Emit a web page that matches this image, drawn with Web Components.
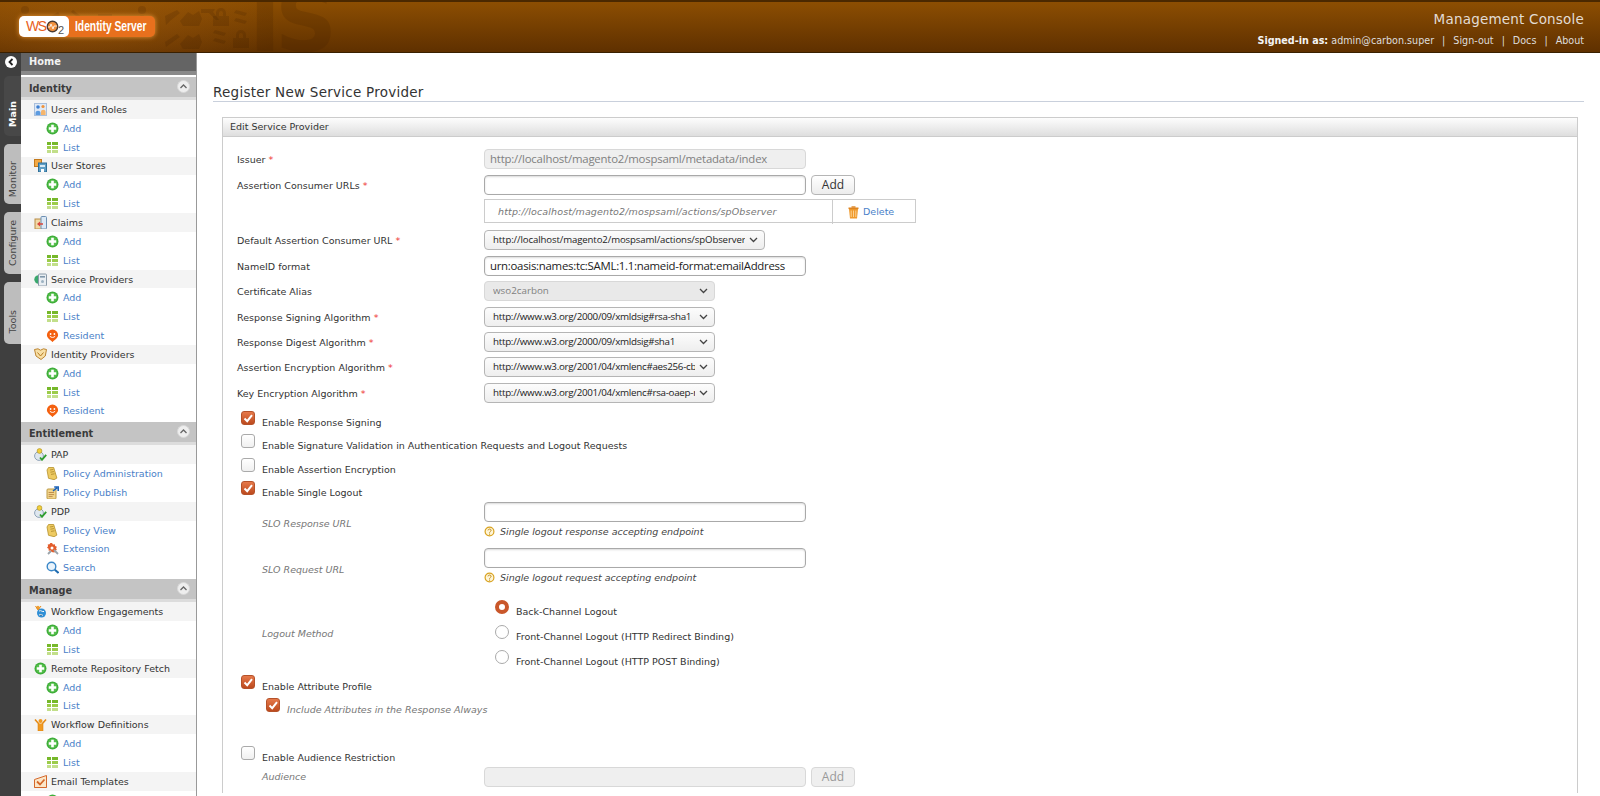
<!DOCTYPE html>
<html>
<head>
<meta charset="utf-8">
<title>Identity Server</title>
<style>
    html, body { margin: 0; height: 796px; overflow: hidden; background: #fff; }
    body { font-family: "DejaVu Sans", sans-serif; font-size: 9.5px; color: #333; }
</style>
</head>
<body>
<app-shell>
    <app-header slot="header"></app-header>
    <side-rail slot="rail"></side-rail>
    <side-nav slot="nav">
        <nav-section title="Identity" first>
            <nav-item icon="users" head>Users and Roles</nav-item>
            <nav-item icon="add">Add</nav-item>
            <nav-item icon="list">List</nav-item>
            <nav-item icon="store" head>User Stores</nav-item>
            <nav-item icon="add">Add</nav-item>
            <nav-item icon="list">List</nav-item>
            <nav-item icon="claims" head>Claims</nav-item>
            <nav-item icon="add">Add</nav-item>
            <nav-item icon="list">List</nav-item>
            <nav-item icon="sp" head>Service Providers</nav-item>
            <nav-item icon="add">Add</nav-item>
            <nav-item icon="list">List</nav-item>
            <nav-item icon="resident">Resident</nav-item>
            <nav-item icon="idp" head>Identity Providers</nav-item>
            <nav-item icon="add">Add</nav-item>
            <nav-item icon="list">List</nav-item>
            <nav-item icon="resident">Resident</nav-item>
        </nav-section>
        <nav-section title="Entitlement">
            <nav-item icon="person" head>PAP</nav-item>
            <nav-item icon="scroll">Policy Administration</nav-item>
            <nav-item icon="publish">Policy Publish</nav-item>
            <nav-item icon="person" head>PDP</nav-item>
            <nav-item icon="scroll">Policy View</nav-item>
            <nav-item icon="extension">Extension</nav-item>
            <nav-item icon="search">Search</nav-item>
        </nav-section>
        <nav-section title="Manage">
            <nav-item icon="engage" head>Workflow Engagements</nav-item>
            <nav-item icon="add">Add</nav-item>
            <nav-item icon="list">List</nav-item>
            <nav-item icon="add" head>Remote Repository Fetch</nav-item>
            <nav-item icon="add">Add</nav-item>
            <nav-item icon="list">List</nav-item>
            <nav-item icon="define" head>Workflow Definitions</nav-item>
            <nav-item icon="add">Add</nav-item>
            <nav-item icon="list">List</nav-item>
            <nav-item icon="mail" head>Email Templates</nav-item>
            <nav-item icon="add">Add</nav-item>
        </nav-section>
    </side-nav>
    <page-title>Register New Service Provider</page-title>
    <form-box title="Edit Service Provider">
        <form-row label="Issuer" required><text-field disabled>http://localhost/magento2/mospsaml/metadata/index</text-field></form-row>
        <form-row label="Assertion Consumer URLs" required style="--gap:4px"><text-field></text-field><form-button>Add</form-button></form-row>
        <form-row style="--gap:7px"><url-table>http://localhost/magento2/mospsaml/actions/spObserver</url-table></form-row>
        <form-row label="Default Assertion Consumer URL" required style="--gap:6px"><select-box width="281" style="font-size:9.6px;letter-spacing:-.1px">http://localhost/magento2/mospsaml/actions/spObserver</select-box></form-row>
        <form-row label="NameID format" style="--gap:5px"><text-field style="letter-spacing:-.27px">urn:oasis:names:tc:SAML:1.1:nameid-format:emailAddress</text-field></form-row>
        <form-row label="Certificate Alias"><select-box disabled>wso2carbon</select-box></form-row>
        <form-row label="Response Signing Algorithm" required style="--gap:5px"><select-box wide>http://www.w3.org/2000/09/xmldsig#rsa-sha1</select-box></form-row>
        <form-row label="Response Digest Algorithm" required style="--gap:5px"><select-box wide>http://www.w3.org/2000/09/xmldsig#sha1</select-box></form-row>
        <form-row label="Assertion Encryption Algorithm" required style="--gap:6px"><select-box wide>http://www.w3.org/2001/04/xmlenc#aes256-cbc</select-box></form-row>
        <form-row label="Key Encryption Algorithm" required style="--gap:8px"><select-box wide>http://www.w3.org/2001/04/xmlenc#rsa-oaep-mgf1p</select-box></form-row>

        <check-row checked>Enable Response Signing</check-row>
        <check-row>Enable Signature Validation in Authentication Requests and Logout Requests</check-row>
        <check-row>Enable Assertion Encryption</check-row>
        <check-row checked style="--after:4px">Enable Single Logout</check-row>

        <form-row label="SLO Response URL" sub style="--gap:8px;--shift:4px"><hint-field>Single logout response accepting endpoint</hint-field></form-row>
        <form-row label="SLO Request URL" sub style="--gap:13.5px;--shift:4px"><hint-field>Single logout request accepting endpoint</hint-field></form-row>
        <form-row label="Logout Method" sub style="--gap:8px">
            <radio-group>
                <radio-row checked>Back-Channel Logout</radio-row>
                <radio-row>Front-Channel Logout (HTTP Redirect Binding)</radio-row>
                <radio-row>Front-Channel Logout (HTTP POST Binding)</radio-row>
            </radio-group>
        </form-row>

        <check-row checked style="--after:6px">Enable Attribute Profile</check-row>
        <check-row checked sub style="--after:31px">Include Attributes in the Response Always</check-row>
        <check-row style="--after:4px">Enable Audience Restriction</check-row>
        <form-row label="Audience" sub><text-field disabled></text-field><form-button disabled>Add</form-button></form-row>
    </form-box>
</app-shell>

<script>
const ICONS = {
    add: '<circle cx="6.5" cy="6.5" r="6" fill="#3fae3a"/><circle cx="6.5" cy="6.5" r="4.6" fill="#58c04e"/><path d="M5.2 2.8h2.6v2.4h2.4v2.6H7.8v2.4H5.2V7.8H2.8V5.2h2.4z" fill="#fff"/>',
    list: '<path d="M1 1h4v3H1zM6 1h6v3H6z" fill="#76b82a"/><path d="M1 5h4v3H1zM6 5h6v3H6z" fill="#9ccc4a"/><path d="M1 9h4v3H1zM6 9h6v3H6z" fill="#c2df8a"/>',
    resident: '<path d="M6.5.5a5.6 5.6 0 0 1 5.6 5.6c0 3-3.2 4.6-5.6 7-2.4-2.4-5.6-4-5.6-7A5.6 5.6 0 0 1 6.5.5z" fill="#f4600f"/><circle cx="4.6" cy="5" r=".9" fill="#fff"/><circle cx="8.4" cy="5" r=".9" fill="#fff"/><path d="M3.8 7.2c1.4 1.6 4 1.6 5.4 0" stroke="#fff" fill="none"/>',
    users: '<rect x=".5" y=".5" width="12" height="12" fill="#dfe9f6" stroke="#a9bfdc"/><circle cx="4" cy="4" r="1.8" fill="#3d7fd0"/><path d="M1.5 10c0-3 5-3 5 0v2h-5z" fill="#5c9be0"/><circle cx="9" cy="3.5" r="1.6" fill="#f0923a"/><path d="M7 9c0-3 4.6-3 4.6 0v3H7z" fill="#f5b56c"/>',
    store: '<rect x=".5" y=".5" width="7" height="7" fill="#f3a945" stroke="#c47a1c"/><rect x="4.5" y="4" width="8" height="9" fill="#5f9fc6" stroke="#2f6f98"/><path d="M6 6h5v2H6z" fill="#d6e9f5"/><path d="M7 10h3v3H7z" fill="#fff"/>',
    claims: '<rect x="1" y="3" width="8" height="10" fill="#f1d9a6" stroke="#b88c45"/><rect x="7" y=".5" width="5.5" height="12.5" rx="1" fill="#dbe8f4" stroke="#6d8fb3"/><path d="M3 8l3-2.4v1.6h3v1.6H6v1.6z" fill="#d9453d"/>',
    sp: '<circle cx="4.5" cy="6.5" r="4.2" fill="#3aa76d"/><rect x="4.5" y="1" width="8" height="12" rx="1" fill="#e9eef2" stroke="#8a9aa8"/><path d="M6 3h5v1.6H6z" fill="#7f97aa"/><circle cx="8.5" cy="8.5" r="1.5" fill="#9db2c2"/>',
    idp: '<path d="M.5 1.5L4 .8l2.5 1.4L9.5.8l3 .7-1.2 6.5L7 11.5 2 8z" fill="#f7dfa6" stroke="#b5791f" stroke-width=".9"/><path d="M3.5 4.5l3 3.5 3-3.5" stroke="#b5791f" fill="none"/>',
    person: '<circle cx="5" cy="8" r="4.4" fill="#dfe7ef" stroke="#8ea3b8"/><circle cx="5.5" cy="3" r="2.4" fill="#f2cf3b" stroke="#a98d1e" stroke-width=".6"/><path d="M6 9.5l2 2.3 4.2-5" stroke="#2f9e2f" stroke-width="1.8" fill="none"/>',
    scroll: '<path d="M2.5.5h5.2l3.2 10.6-2.8 1.6-5.6-1.4L1 3z" fill="#eecb62" stroke="#b5912b" stroke-width=".8"/><path d="M4 3l3.4-.6M4.4 5.2l3.6-.6M5 7.4l3.6-.6" stroke="#a9852a" stroke-width=".8"/>',
    publish: '<rect x="1" y="3" width="9" height="10" rx="1" fill="#f2d58c" stroke="#bd9a45"/><path d="M2.6 6.5h5.5M2.6 8.6h5.5M2.6 10.6h4" stroke="#b27b3a" stroke-width=".8"/><path d="M7 5l4-3.2M8.2 1h4v4" stroke="#1d63b8" stroke-width="1.6" fill="none"/>',
    extension: '<path d="M6 1l1 1.6 1.8-.4.4 1.8 1.7.8-.8 1.7.8 1.6-1.9.7-.4 1.8-1.8-.3L5.6 10 4.5 8.6l-1.8.1-.1-1.9L1 5.8l1.1-1.5-.4-1.8 1.8-.2L4.4 1z" fill="#e35d2c"/><circle cx="6" cy="6" r="1.5" fill="#fff"/><path d="M8 8l4 4M2 12l3-3" stroke="#9aa3aa" stroke-width="1.8"/>',
    search: '<circle cx="5.5" cy="5.5" r="4.3" fill="#e9f3fb" stroke="#3a87c8" stroke-width="1.4"/><path d="M8.8 8.8l3.7 3.2" stroke="#1f6cb0" stroke-width="2"/>',
    engage: '<circle cx="7.5" cy="8" r="4.5" fill="#2f8fd6"/><path d="M5 6c2-1 3 1 5 .5M5 10c2-1 3 0 4 .5" stroke="#fff"/><circle cx="4" cy="2.5" r="1.7" fill="#f0a030"/><path d="M1.5 1L4 5l3-4" stroke="#e48a1d" fill="none"/>',
    define: '<circle cx="6.5" cy="3" r="2" fill="#f09a22"/><path d="M1 1.5l3.5 4v7h4v-7l3.5-4" stroke="#e58a14" stroke-width="1.6" fill="none"/><rect x="4.5" y="5.5" width="4" height="7" fill="#f09a22"/>',
    mail: '<path d="M.5 4.5L12.5.5v12H.5z" fill="#fbe6c8" stroke="#d4682a"/><path d="M.5 12.5h12" stroke="#d4682a"/><path d="M3 6.5l3 3 4.5-5" stroke="#d4682a" stroke-width="1.8" fill="none"/>',
    trash: '<path d="M2 3h9l-1 9.5H3z" fill="#f09a2c"/><path d="M4.2 4.5V11M6.5 4.5V11M8.8 4.5V11" stroke="#fbd193"/><rect x="1.5" y="1.5" width="10" height="1.6" fill="#dd8420"/><rect x="4.5" y=".3" width="4" height="1.4" fill="#dd8420"/>',
    help: '<circle cx="6.5" cy="6.5" r="5.2" fill="#fff6d8" stroke="#d9a21f" stroke-width="1.4"/><path d="M4.7 5.2c.2-2.2 3.8-2 3.7 0 0 1.3-1.8 1.3-1.8 2.7" stroke="#b8820f" stroke-width="1.1" fill="none"/><circle cx="6.6" cy="9.6" r=".8" fill="#b8820f"/>'
}

function iconSvg(name, size) {
    return `<svg width="${size}" height="${size}" viewBox="0 0 13 13" aria-hidden="true">${ICONS[name] || ''}</svg>`
}

class AppShell extends HTMLElement {
    constructor() {
        super()
        this.attachShadow({mode: 'open'}).innerHTML = `
            <style>
                :host { display: block; width: 1600px; height: 796px; overflow: hidden; }
                .body { display: flex; height: 743px; overflow: hidden; }
                main { flex: 1; min-width: 0; padding: 0 16px; }
            </style>
            <slot name="header"></slot>
            <div class="body">
                <slot name="rail"></slot>
                <slot name="nav"></slot>
                <main><slot></slot></main>
            </div>
        `
    }
}

class AppHeader extends HTMLElement {
    constructor() {
        super()
        this.attachShadow({mode: 'open'}).innerHTML = `
            <style>
                :host {
                    display: flex;
                    justify-content: space-between;
                    position: relative;
                    height: 53px;
                    box-sizing: border-box;
                    overflow: hidden;
                    padding: 16px 16px 0 19px;
                    border-top: 2px solid #4a2800;
                    border-bottom: 1px solid #3a2000;
                    background: radial-gradient(ellipse 190px 60px at 90px 26px, rgba(190,110,20,.35), rgba(190,110,20,0)), linear-gradient(#8c4e02, #5f3000);
                }
                .mark { position: absolute; left: 20px; top: 2px; }
                .big {
                    position: absolute;
                    left: 249px;
                    top: -24px;
                    font: bold 86px/1 "DejaVu Sans", sans-serif;
                    letter-spacing: -6px;
                    color: rgba(60, 28, 0, .18);
                }
                .logo {
                    display: flex;
                    position: relative;
                    width: 136px;
                    height: 21px;
                    margin-top: -2px;
                    border-radius: 5px;
                    background: #e8701d;
                    box-shadow: 0 0 5px rgba(255, 170, 70, .8);
                }
                .wso {
                    position: relative;
                    flex: none;
                    box-sizing: border-box;
                    width: 50px;
                    padding: 3px 0 0 7px;
                    border-radius: 5px;
                    background: #fff;
                    font: 14px/15px "Liberation Sans", sans-serif;
                    letter-spacing: -1.5px;
                    color: #e8601d;
                }
                .wso svg { position: absolute; left: 27px; top: 4px; }
                .wso sub { position: absolute; left: 39px; top: 9px; font-size: 11px; line-height: 11px; color: #555; }
                .name {
                    margin-left: 6px;
                    white-space: nowrap;
                    transform: scaleX(.71);
                    transform-origin: left center;
                    font: bold 14.5px/21px "Liberation Sans", sans-serif;
                    color: #fff;
                }
                .right { position: relative; text-align: right; color: #ddd; }
                .title { margin-top: -10px; font-size: 13.5px; line-height: 22px; letter-spacing: .2px; color: #e2dcd4; }
                .user { display: flex; gap: 8px; justify-content: flex-end; margin-top: 4px; font-size: 9.6px; line-height: 13px; color: #ddd; }
                b { color: #f4f4f4; }
            </style>
            <svg class="mark" width="240" height="50" viewBox="0 0 240 50" fill="rgba(50,22,0,.15)">
                <circle cx="5" cy="6" r="4"/><path d="M0 16c0-6 10-6 10 0v3H0z"/>
                <circle cx="122" cy="6" r="4"/><path d="M117 16c0-6 10-6 10 0v3h-10z"/>
                <path d="M28 14l10-6 2 3-10 6zM53 6l10 8-2 2-10-8zM78 10h14v7H78z"/>
                <path d="M145 12l12-6 3 3-10 8-4 4zM160 17l8-9 5 3 6-4 3 8-3 7h-16z"/>
                <path d="M181 5h14l-2 3 6 8h-3l-7-7h-8z"/>
                <path d="M196 12v-3a5 5 0 0 1 10 0v3h3v10h-16V12zm3 0h4V9a2 2 0 0 0-4 0z"/>
                <path d="M216 6l11 3-2 3-11-3zM216 14l11 3-2 3-11-3z"/>
                <path d="M145 38l12-8 3 3-10 7-4 3zM160 40l8-9 5 3 6-4 3 8-3 7h-16z"/>
                <path d="M195 26l11 3-2 3-11-3zM195 34l11 3-2 3-11-3z"/>
                <path d="M216 34v-3a5 5 0 0 1 10 0v3h3v10h-16V34zm3 0h4v-3a2 2 0 0 0-4 0z"/>
            </svg>
            <div class="big">IS</div>
            <div class="logo">
                <div class="wso">WS
                    <svg width="13" height="13" viewBox="0 0 13 13"><circle cx="6.5" cy="6.5" r="5.2" fill="#f2913d" stroke="#4a3a30" stroke-width="1.4"/><path d="M2 7h2l1-3 2 5 1-3h3" stroke="#fff" fill="none" stroke-width=".8"/></svg>
                    <sub>2</sub>
                </div>
                <div class="name">Identity Server</div>
            </div>
            <div class="right">
                <div class="title">Management Console</div>
                <div class="user"><span><b>Signed-in as:</b> admin@carbon.super</span><span>|</span><span>Sign-out</span><span>|</span><span>Docs</span><span>|</span><span>About</span></div>
            </div>
        `
    }
}

class SideRail extends HTMLElement {
    constructor() {
        super()
        this.attachShadow({mode: 'open'}).innerHTML = `
            <style>
                :host {
                    display: flex;
                    flex-direction: column;
                    align-items: flex-end;
                    flex: none;
                    width: 21px;
                    box-sizing: border-box;
                    background: #3f3f3f;
                }
                .toggle {
                    align-self: flex-start;
                    width: 12px;
                    height: 12px;
                    margin: 3px 0 7px 5px;
                    border-radius: 50%;
                    background: #fff;
                }
                .toggle svg { display: block; }
                .tab {
                    display: flex;
                    align-items: center;
                    justify-content: center;
                    box-sizing: border-box;
                    width: 17px;
                    margin-bottom: 8px;
                    border-radius: 5px 0 0 5px;
                    background: #bdbdbd;
                    color: #444;
                    font-size: 9.5px;
                }
                .tab span { writing-mode: vertical-rl; transform: rotate(180deg); }
                .tab.on { background: #484848; color: #fff; font-weight: bold; }
            </style>
            <div class="toggle"><svg width="12" height="12" viewBox="0 0 12 12"><path d="M7.5 3L4.5 6l3 3" stroke="#222" stroke-width="1.8" fill="none"/></svg></div>
            <div class="tab on" style="height:60px;margin-top:1px;padding-top:16px"><span>Main</span></div>
            <div class="tab" style="height:60px;padding-top:10px"><span>Monitor</span></div>
            <div class="tab" style="height:62px"><span>Configure</span></div>
            <div class="tab" style="height:62px;padding-top:18px"><span>Tools</span></div>
        `
    }
}

class SideNav extends HTMLElement {
    constructor() {
        super()
        this.attachShadow({mode: 'open'}).innerHTML = `
            <style>
                :host {
                    display: block;
                    flex: none;
                    width: 176px;
                    box-sizing: border-box;
                    border-right: 1.5px solid #999;
                    background: #fff;
                    overflow: hidden;
                }
                .home {
                    height: 18px;
                    padding-left: 8px;
                    background: #646464;
                    border-bottom: 4px solid #8a8a8a;
                    font-weight: bold;
                    font-size: 9.8px;
                    line-height: 17px;
                    color: #f2f2f2;
                }
            </style>
            <div class="home">Home</div>
            <slot></slot>
        `
    }
}

class NavSection extends HTMLElement {
    constructor() {
        super()
        this.attachShadow({mode: 'open'}).innerHTML = `
            <style>
                :host { display: block; }
                .head {
                    display: flex;
                    justify-content: space-between;
                    box-sizing: border-box;
                    height: 23px;
                    margin-top: 2px;
                    padding: 3px 6px 0 8px;
                    background: #c4c4c4;
                    border-bottom: 3px solid #dcdcdc;
                    font-weight: bold;
                    font-size: 9.7px;
                    line-height: 17px;
                    color: #3a3a3a;
                }
                svg { display: block; }
            </style>
            <div class="head">
                <span>${this.getAttribute('title')}</span>
                <svg width="13" height="13" viewBox="0 0 13 13"><circle cx="6.5" cy="6.5" r="6" fill="#eee" stroke="#d8d8d8"/><path d="M3.5 8l3-3 3 3" stroke="#666" stroke-width="1.3" fill="none"/></svg>
            </div>
            <slot></slot>
        `
    }
}

class NavItem extends HTMLElement {
    constructor() {
        super()
        const head = this.hasAttribute('head')
        this.attachShadow({mode: 'open'}).innerHTML = `
            <style>
                :host {
                    display: flex;
                    align-items: center;
                    gap: 4px;
                    height: 18.85px;
                    box-sizing: border-box;
                    padding-left: ${head ? 13 : 25}px;
                    font-size: 9.5px;
                    color: ${head ? '#333' : '#4a7fc8'};
                    background: ${head ? '#f4f4f4' : 'transparent'};
                }
                svg { display: block; flex: none; }
            </style>
            ${iconSvg(this.getAttribute('icon'), 13)}
            <span><slot></slot></span>
        `
    }
}

class PageTitle extends HTMLElement {
    constructor() {
        super()
        this.attachShadow({mode: 'open'}).innerHTML = `
            <style>
                :host {
                    display: block;
                    box-sizing: border-box;
                    height: 49px;
                    padding-top: 30px;
                    border-bottom: 1px solid #c9d0dc;
                    font-size: 13.5px;
                    line-height: 18px;
                    letter-spacing: .25px;
                    color: #333;
                }
            </style>
            <slot></slot>
        `
    }
}

class FormBox extends HTMLElement {
    constructor() {
        super()
        this.attachShadow({mode: 'open'}).innerHTML = `
            <style>
                :host {
                    display: block;
                    margin: 15px 6px 0 9px;
                    border: 1px solid #ccc;
                    border-bottom: 0;
                }
                .head {
                    height: 18px;
                    padding-left: 7px;
                    background: linear-gradient(#fdfdfd, #dedede);
                    border-bottom: 1px solid #ccc;
                    font-size: 9.5px;
                    line-height: 17px;
                    color: #333;
                }
                .rows { display: flex; flex-direction: column; padding: 12px 0 0 14px; }
            </style>
            <div class="head">${this.getAttribute('title')}</div>
            <div class="rows"><slot></slot></div>
        `
    }
}

class FormRow extends HTMLElement {
    constructor() {
        super()
        const label = this.getAttribute('label') || ''
        const star = this.hasAttribute('required') ? ' <i>*</i>' : ''
        const sub = this.hasAttribute('sub')
        this.attachShadow({mode: 'open'}).innerHTML = `
            <style>
                :host {
                    display: grid;
                    grid-template-columns: 247px 1fr;
                    align-items: center;
                    margin-bottom: var(--gap, 6px);
                }
                .label {
                    margin-top: var(--shift, 0);
                    padding-left: ${sub ? 25 : 0}px;
                    font-size: 9.5px;
                    font-style: ${sub ? 'italic' : 'normal'};
                    color: ${sub ? '#777' : '#333'};
                }
                .label i { font-style: normal; color: #e33; }
                .control { display: flex; gap: 5px; align-items: flex-start; }
            </style>
            <div class="label">${label}${star}</div>
            <div class="control"><slot></slot></div>
        `
    }
}

class TextField extends HTMLElement {
    constructor() {
        super()
        const off = this.hasAttribute('disabled')
        this.attachShadow({mode: 'open'}).innerHTML = `
            <style>
                :host {
                    display: block;
                    box-sizing: border-box;
                    width: 322px;
                    height: 20px;
                    padding-left: 5px;
                    overflow: hidden;
                    white-space: nowrap;
                    border: 1px solid ${off ? '#d8d8d8' : '#a9a9a9'};
                    border-radius: 4px;
                    background: ${off ? '#efefef' : '#fff'};
                    box-shadow: ${off ? 'none' : 'inset 0 1px 2px rgba(0,0,0,.15)'};
                    font: 11.4px/18px "Open Sans", sans-serif;
                    letter-spacing: -.2px;
                    color: ${off ? '#808080' : '#222'};
                }
            </style>
            <slot></slot>
        `
    }
}

class FormButton extends HTMLElement {
    constructor() {
        super()
        const off = this.hasAttribute('disabled')
        this.attachShadow({mode: 'open'}).innerHTML = `
            <style>
                :host {
                    display: block;
                    box-sizing: border-box;
                    width: 44px;
                    height: 20px;
                    text-align: center;
                    border: 1px solid ${off ? '#d8d8d8' : '#b5b5b5'};
                    border-radius: 4px;
                    background: ${off ? '#efefef' : 'linear-gradient(#fff, #ececec)'};
                    font: 12px/18px "Open Sans", sans-serif;
                    color: ${off ? '#999' : '#333'};
                }
            </style>
            <slot></slot>
        `
    }
}

class SelectBox extends HTMLElement {
    constructor() {
        super()
        const off = this.hasAttribute('disabled')
        const wide = this.hasAttribute('wide')
        const width = this.getAttribute('width') || 231
        this.attachShadow({mode: 'open'}).innerHTML = `
            <style>
                :host {
                    display: flex;
                    align-items: center;
                    box-sizing: border-box;
                    width: ${width}px;
                    height: 20px;
                    padding: 0 6px 0 8px;
                    border: 1px solid ${off ? '#d8d8d8' : '#b5b5b5'};
                    border-radius: 4px;
                    background: ${off ? '#e9e9e9' : 'linear-gradient(#fcfcfc, #eeeeee)'};
                    font: 9.8px/18px "Open Sans", sans-serif;
                    letter-spacing: ${wide ? -.28 : 0}px;
                    color: ${off ? '#808080' : '#222'};
                }
                .value { flex: 1; min-width: 0; overflow: hidden; white-space: nowrap; }
                svg { flex: none; margin-left: 4px; }
            </style>
            <div class="value"><slot></slot></div>
            <svg width="9" height="6" viewBox="0 0 9 6"><path d="M1 1l3.5 3.5L8 1" stroke="#444" stroke-width="1.3" fill="none"/></svg>
        `
    }
}

class UrlTable extends HTMLElement {
    constructor() {
        super()
        this.attachShadow({mode: 'open'}).innerHTML = `
            <style>
                :host {
                    display: grid;
                    grid-template-columns: 348px 1fr;
                    width: 432px;
                    height: 24px;
                    box-sizing: border-box;
                    border: 1px solid #ccc;
                    font-size: 9.5px;
                    line-height: 24px;
                }
                .url { padding-left: 13px; border-right: 1px solid #ccc; font-style: italic; letter-spacing: .15px; color: #777; }
                .del { display: flex; align-items: center; gap: 3px; padding-left: 14px; color: #4a7fc8; }
                svg { display: block; }
            </style>
            <div class="url"><slot></slot></div>
            <div class="del">${iconSvg('trash', 13)}<span>Delete</span></div>
        `
    }
}

class HintField extends HTMLElement {
    constructor() {
        super()
        this.attachShadow({mode: 'open'}).innerHTML = `
            <style>
                :host { display: block; }
                .field {
                    box-sizing: border-box;
                    width: 322px;
                    height: 20px;
                    border: 1px solid #a9a9a9;
                    border-radius: 4px;
                    box-shadow: inset 0 1px 2px rgba(0,0,0,.15);
                }
                .hint {
                    display: flex;
                    align-items: center;
                    gap: 5px;
                    height: 18px;
                    font-size: 9.5px;
                    font-style: italic;
                    color: #444;
                }
                svg { display: block; flex: none; }
            </style>
            <div class="field"></div>
            <div class="hint">${iconSvg('help', 11)}<span><slot></slot></span></div>
        `
    }
}

class CheckRow extends HTMLElement {
    constructor() {
        super()
        const sub = this.hasAttribute('sub')
        const on = this.hasAttribute('checked')
        const box = on ? '<path d="M3.5 7.5l2.7 2.7 4.8-6" stroke="#fff" stroke-width="2" fill="none"/>' : ''
        this.attachShadow({mode: 'open'}).innerHTML = `
            <style>
                :host {
                    display: flex;
                    gap: 7px;
                    height: 17px;
                    margin: 0 0 var(--after, 6.4px) ${sub ? 29 : 4}px;
                    font-size: 9.5px;
                    font-style: ${sub ? 'italic' : 'normal'};
                    color: ${sub ? '#777' : '#333'};
                }
                .box {
                    box-sizing: border-box;
                    flex: none;
                    width: 14px;
                    height: 14px;
                    border-radius: 3px;
                    border: 1px solid ${on ? '#b5522a' : '#aaa'};
                    background: ${on ? 'linear-gradient(#e6794a, #bc4a1e)' : 'linear-gradient(#fff, #f0f0f0)'};
                }
                svg { display: block; margin: -1px; }
                span { padding-top: 5px; line-height: 13px; }
            </style>
            <div class="box"><svg width="14" height="14" viewBox="0 0 14 14">${box}</svg></div>
            <span><slot></slot></span>
        `
    }
}

class RadioGroup extends HTMLElement {
    constructor() {
        super()
        this.attachShadow({mode: 'open'}).innerHTML = `
            <style>
                :host { display: flex; flex-direction: column; gap: 8px; padding-left: 11px; }
            </style>
            <slot></slot>
        `
    }
}

class RadioRow extends HTMLElement {
    constructor() {
        super()
        const on = this.hasAttribute('checked')
        this.attachShadow({mode: 'open'}).innerHTML = `
            <style>
                :host {
                    display: flex;
                    gap: 7px;
                    height: 17px;
                    font-size: 9.5px;
                    color: #333;
                }
                .dot {
                    box-sizing: border-box;
                    flex: none;
                    width: 14px;
                    height: 14px;
                    border-radius: 50%;
                    border: ${on ? '4px solid #c9572a' : '1px solid #aaa'};
                    background: #fff;
                }
                span { padding-top: 5px; line-height: 13px; }
            </style>
            <div class="dot"></div>
            <span><slot></slot></span>
        `
    }
}

customElements.define('app-shell', AppShell)
customElements.define('app-header', AppHeader)
customElements.define('side-rail', SideRail)
customElements.define('side-nav', SideNav)
customElements.define('nav-section', NavSection)
customElements.define('nav-item', NavItem)
customElements.define('page-title', PageTitle)
customElements.define('form-box', FormBox)
customElements.define('form-row', FormRow)
customElements.define('text-field', TextField)
customElements.define('form-button', FormButton)
customElements.define('select-box', SelectBox)
customElements.define('url-table', UrlTable)
customElements.define('hint-field', HintField)
customElements.define('check-row', CheckRow)
customElements.define('radio-group', RadioGroup)
customElements.define('radio-row', RadioRow)
</script>
</body>
</html>
